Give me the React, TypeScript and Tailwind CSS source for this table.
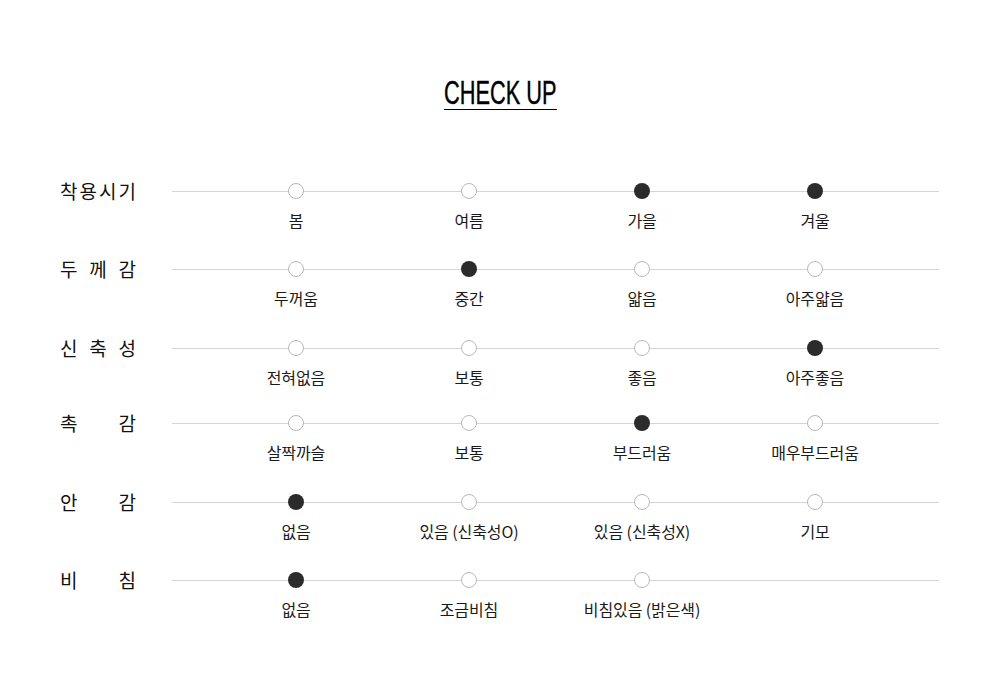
import React from "react";

type Row = { label: string[]; opts: [string, boolean][]; h: string };

const rows: Row[] = [
  { label: ["착", "용", "시", "기"], opts: [["봄", false], ["여름", false], ["가을", true], ["겨울", true]], h: "h-[78px]" },
  { label: ["두", "께", "감"], opts: [["두꺼움", false], ["중간", true], ["얇음", false], ["아주얇음", false]], h: "h-[79px]" },
  { label: ["신", "축", "성"], opts: [["전혀없음", false], ["보통", false], ["좋음", false], ["아주좋음", true]], h: "h-[75px]" },
  { label: ["촉", "감"], opts: [["살짝까슬", false], ["보통", false], ["부드러움", true], ["매우부드러움", false]], h: "h-[79px]" },
  { label: ["안", "감"], opts: [["없음", true], ["있음 (신축성O)", false], ["있음 (신축성X)", false], ["기모", false]], h: "h-[78px]" },
  { label: ["비", "침"], opts: [["없음", true], ["조금비침", false], ["비침있음 (밝은색)", false]], h: "h-[78px]" },
];

export default function App() {
  return (
    <div
      className="w-[1000px] h-[698px] bg-white text-[#222]"
      style={{ fontFamily: '"Noto Sans CJK KR", "Noto Sans", sans-serif' }}
    >
      <div className="pt-[76px] flex justify-center">
        <div
          className="h-[34px] text-[33px] leading-[33px] text-black border-b border-black scale-x-[0.66] origin-center whitespace-nowrap [-webkit-text-stroke:0.4px_black]"
          style={{ fontFamily: '"Liberation Sans", Arial, sans-serif' }}
        >
          CHECK UP
        </div>
      </div>
      <div className="mt-[73px] flex flex-col">
        {rows.map((r, i) => (
          <div key={i} className={`flex ${r.h}`}>
            <div className="w-[172px] pl-[60px] shrink-0">
              <div className="w-[76px] -mt-[5px] flex justify-between text-[19px] leading-[26px] text-[#111]">
                {r.label.map((c, j) => (
                  <span key={j}>{c}</span>
                ))}
              </div>
            </div>
            <div className="relative w-[767px] shrink-0">
              <div className="absolute left-0 right-0 top-[8px] h-px bg-[#d4d4d4]" />
              <div className="relative grid grid-cols-4 px-[37.5px]">
                {r.opts.map(([t, on], j) => (
                  <div key={j} className="flex flex-col items-center">
                    <div
                      className={
                        on
                          ? "w-4 h-4 rounded-full bg-[#2b2b2b]"
                          : "w-4 h-4 rounded-full border border-[#b8b8b8] bg-white"
                      }
                    />
                    <div className="mt-[9px] text-[16px] leading-[24px] text-[#1a1a1a] whitespace-nowrap tracking-[-0.1px]">
                      {t}
                    </div>
                  </div>
                ))}
              </div>
            </div>
          </div>
        ))}
      </div>
    </div>
  );
}
